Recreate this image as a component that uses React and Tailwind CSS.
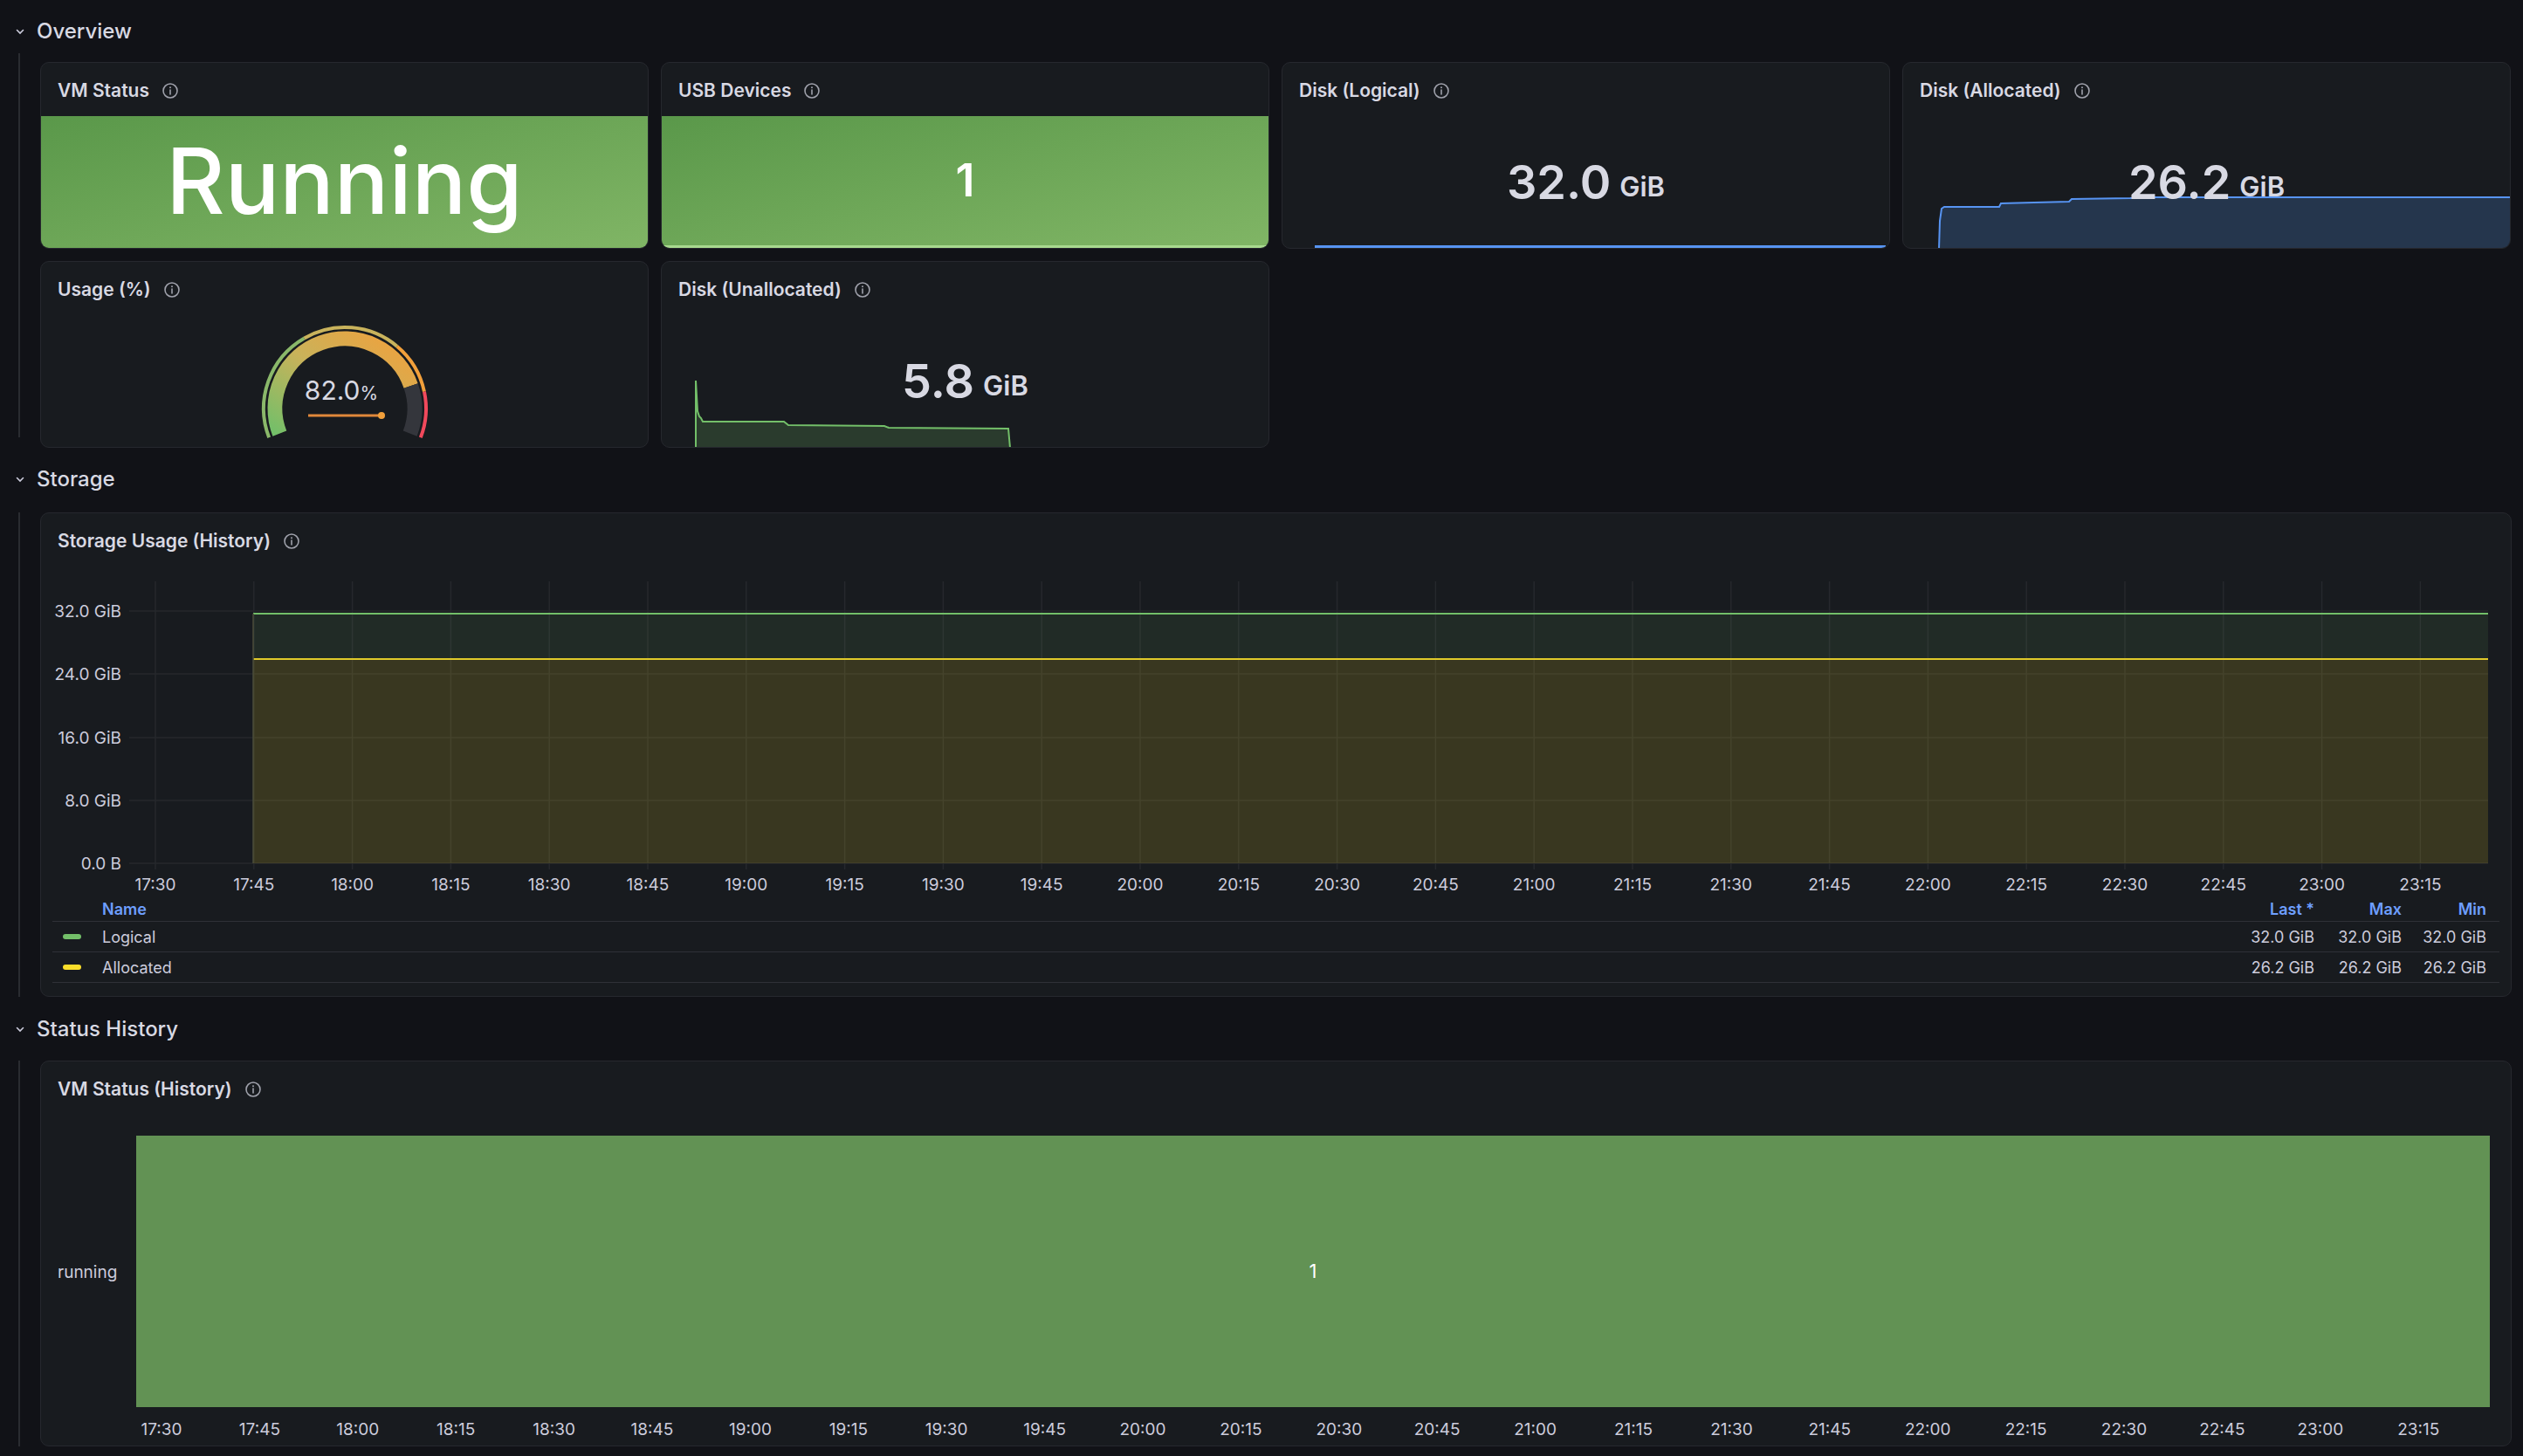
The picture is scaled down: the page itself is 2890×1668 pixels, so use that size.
import React from "react";

const times = ["17:30","17:45","18:00","18:15","18:30","18:45","19:00","19:15","19:30","19:45","20:00","20:15","20:30","20:45","21:00","21:15","21:30","21:45","22:00","22:15","22:30","22:45","23:00","23:15"];

function Info() {
  return (
    <svg width="20" height="20" viewBox="0 0 20 20" className="shrink-0">
      <circle cx="10" cy="10" r="8" fill="none" stroke="#9fa1ab" strokeWidth="1.6" />
      <line x1="10" y1="9" x2="10" y2="14" stroke="#9fa1ab" strokeWidth="1.6" strokeLinecap="round" />
      <circle cx="10" cy="6.2" r="1" fill="#9fa1ab" />
    </svg>
  );
}

function Chevron() {
  return (
    <svg width="14" height="14" viewBox="0 0 14 14" className="mr-[12px]">
      <path d="M3.5 5.5 L7 9 L10.5 5.5" fill="none" stroke="#ccccdc" strokeWidth="1.6" strokeLinecap="round" />
    </svg>
  );
}

function SectionHeader({ title, cls }) {
  return (
    <div className={"flex items-center pl-[16px] h-[32px] " + cls}>
      <Chevron />
      <span className="text-[24px] text-[#d8d9e3] font-medium">{title}</span>
    </div>
  );
}

function Title({ t }) {
  return (
    <div className="flex items-center gap-[14px] h-[61px] pl-[19px] pt-[2px] shrink-0">
      <span className="text-[21px] font-semibold text-[#d8d9e3]">{t}</span>
      <Info />
    </div>
  );
}

function Panel({ children, cls = "" }) {
  return (
    <div className={"relative flex flex-col bg-[#181b1f] border border-[#26282e] rounded-[10px] overflow-hidden " + cls}>
      {children}
    </div>
  );
}

function Value({ v, u }) {
  return (
    <div className="absolute inset-0 flex items-center justify-center pointer-events-none">
      <span className="text-[54px] font-semibold text-[#d8d9e3] leading-none">{v}</span>
      <span className="text-[31px] font-semibold text-[#d8d9e3] ml-[10px] mt-[10px] leading-none">{u}</span>
    </div>
  );
}

function polar(cx, cy, r, deg) {
  const a = (deg - 90) * Math.PI / 180;
  return [cx + r * Math.cos(a), cy + r * Math.sin(a)];
}
function arc(cx, cy, r, a1, a2) {
  const [x1, y1] = polar(cx, cy, r, a1);
  const [x2, y2] = polar(cx, cy, r, a2);
  const large = a2 - a1 > 180 ? 1 : 0;
  return `M${x1} ${y1} A${r} ${r} 0 ${large} 1 ${x2} ${y2}`;
}

function Gauge() {
  const cx = 348, cy = 107, s = -111, e = 111;
  const v = s + (e - s) * 0.82;
  return (
    <svg width="697" height="153" className="absolute left-0 top-0">
      <defs>
        <linearGradient id="gg" x1="0" y1="1" x2="1" y2="0">
          <stop offset="0" stopColor="#73bf69" />
          <stop offset="0.5" stopColor="#c9b25a" />
          <stop offset="1" stopColor="#f2a03b" />
        </linearGradient>
      </defs>
      <path d={arc(cx, cy, 93, s, -30)} stroke="#8ab86a" strokeWidth="4" fill="none" />
      <path d={arc(cx, cy, 93, -30, 40)} stroke="#c9b35c" strokeWidth="4" fill="none" />
      <path d={arc(cx, cy, 93, 40, 78)} stroke="#f2a03b" strokeWidth="4" fill="none" />
      <path d={arc(cx, cy, 93, 78, e)} stroke="#f2495c" strokeWidth="4" fill="none" />
      <path d={arc(cx, cy, 80, s, v)} stroke="url(#gg)" strokeWidth="17" fill="none" />
      <path d={arc(cx, cy, 80, v, e)} stroke="#34363c" strokeWidth="17" fill="none" />
      <text x={cx - 4} y={cy - 10} textAnchor="middle" fill="#d8d9e3" fontSize="30" fontFamily="Inter">82.0<tspan fontSize="21">%</tspan></text>
      <line x1="306" y1="115" x2="390" y2="115" stroke="#e0883a" strokeWidth="3" />
      <circle cx="390" cy="115" r="4" fill="#f2a03b" />
    </svg>
  );
}

function StorageChart() {
  const xs = times.map((_, i) => 131 + i * 112.8);
  const ys = [112, 184, 257, 329, 401];
  const labels = ["32.0 GiB", "24.0 GiB", "16.0 GiB", "8.0 GiB", "0.0 B"];
  return (
    <svg width="2831" height="440" className="absolute left-0 top-0" fontFamily="Inter">
      {ys.map((y, i) => (
        <g key={i}>
          <line x1="101" x2="2803" y1={y} y2={y} stroke="#26282d" strokeWidth="1.5" />
          <text x="92" y={y + 7} textAnchor="end" fill="#ccccdc" fontSize="19">{labels[i]}</text>
        </g>
      ))}
      {xs.map((x, i) => (
        <g key={i}>
          <line x1={x} x2={x} y1="78" y2="408" stroke="#26282d" strokeWidth="1.5" />
          <text x={x} y="432" textAnchor="middle" fill="#ccccdc" fontSize="19">{times[i]}</text>
        </g>
      ))}
      <rect x="243" y="115" width="2560" height="52" fill="#73bf69" fillOpacity="0.1" />
      <rect x="243" y="167" width="2560" height="234" fill="#fade2a" fillOpacity="0.15" />
      <line x1="243" x2="2803" y1="115" y2="115" stroke="#73bf69" strokeWidth="2" />
      <line x1="243" x2="2803" y1="167" y2="167" stroke="#e0c92a" strokeWidth="2" />
      <line x1="243" x2="243" y1="115" y2="401" stroke="#4a4d3a" strokeWidth="1.5" />
    </svg>
  );
}

export default function App() {
  const font = { fontFamily: "Inter, 'Noto Sans', sans-serif" };
  return (
    <div className="w-[2890px] h-[1668px] bg-[#111217] flex flex-col text-[#ccccdc] overflow-hidden" style={font}>
      <SectionHeader title="Overview" cls="mt-[20px]" />
      <div className="flex mt-[19px]">
        <div className="ml-[21px] w-[2px] bg-[#2a2c31] h-[440px] -mt-[10px]" />
        <div className="ml-[23px] grid grid-cols-[697px_697px_697px_697px] grid-rows-[214px_214px] gap-[14px]">
          <Panel>
            <Title t="VM Status" />
            <div className="flex-1 flex items-center justify-center bg-gradient-to-br from-[#5a984a] to-[#80b565]">
              <span className="text-[104px] font-medium text-white leading-none -mt-[4px]">Running</span>
            </div>
          </Panel>
          <Panel>
            <Title t="USB Devices" />
            <div className="flex-1 flex items-center justify-center bg-gradient-to-br from-[#5a984a] to-[#80b565] border-b-[3px] border-[#a8d98f]">
              <span className="text-[52px] font-semibold text-white leading-none">1</span>
            </div>
          </Panel>
          <Panel>
            <Title t="Disk (Logical)" />
            <div className="relative flex-1">
              <div className="absolute left-[37px] right-[4px] bottom-[0px] h-[3px] bg-[#5794f2]" />
              <Value v="32.0" u="GiB" />
            </div>
          </Panel>
          <Panel>
            <Title t="Disk (Allocated)" />
            <div className="relative flex-1">
              <svg width="697" height="153" className="absolute left-0 top-0">
                <path d="M39 153 L41 153 L42 120 L44 106 L47 104 L110 104 L112 100 L150 99 L190 98 L193 95 L260 94 L275 93 L697 93 L697 153 Z" fill="#5794f2" fillOpacity="0.22" />
                <path d="M39 153 L41 153 L42 120 L44 106 L47 104 L110 104 L112 100 L150 99 L190 98 L193 95 L260 94 L275 93 L697 93" fill="none" stroke="#5794f2" strokeWidth="2" />
              </svg>
              <Value v="26.2" u="GiB" />
            </div>
          </Panel>
          <Panel>
            <Title t="Usage (%)" />
            <div className="relative flex-1">
              <Gauge />
            </div>
          </Panel>
          <Panel>
            <Title t="Disk (Unallocated)" />
            <div className="relative flex-1">
              <svg width="697" height="153" className="absolute left-0 top-0">
                <path d="M39 153 L39 75 L41 110 L43 116 L45 118 L47 122 L140 122 L145 126 L255 127 L260 129 L397 130 L399 153 Z" fill="#73bf69" fillOpacity="0.2" />
                <path d="M39 153 L39 75 L41 110 L43 116 L45 118 L47 122 L140 122 L145 126 L255 127 L260 129 L397 130 L399 152 L697 152" fill="none" stroke="#73bf69" strokeWidth="2" />
              </svg>
              <Value v="5.8" u="GiB" />
            </div>
          </Panel>
        </div>
      </div>

      <SectionHeader title="Storage" cls="mt-[20px]" />
      <div className="flex mt-[22px]">
        <div className="ml-[21px] w-[2px] bg-[#2a2c31] h-[555px]" />
        <div className="ml-[23px] w-[2831px] h-[555px]">
          <Panel cls="h-full">
            <Title t="Storage Usage (History)" />
            <StorageChart />
            <div className="absolute left-[13px] right-[13px] top-[440px] text-[18px]">
              <div className="flex items-center h-[28px] border-b border-[#2f3137]">
                <span className="ml-[57px] text-[#6e9fff] font-semibold flex-1">Name</span>
                <span className="w-[100px] text-right text-[#6e9fff] font-semibold">Last *</span>
                <span className="w-[100px] text-right text-[#6e9fff] font-semibold">Max</span>
                <span className="w-[97px] text-right text-[#6e9fff] font-semibold mr-[15px]">Min</span>
              </div>
              {[["Logical", "#73bf69", "32.0 GiB"], ["Allocated", "#fade2a", "26.2 GiB"]].map(([n, c, v]) => (
                <div key={n} className="flex items-center h-[35px] border-b border-[#2f3137] text-[#ccccdc]">
                  <span className="ml-[12px] w-[21px] h-[6px] rounded-full" style={{ background: c }} />
                  <span className="ml-[24px] flex-1">{n}</span>
                  <span className="w-[100px] text-right">{v}</span>
                  <span className="w-[100px] text-right">{v}</span>
                  <span className="w-[97px] text-right mr-[15px]">{v}</span>
                </div>
              ))}
            </div>
          </Panel>
        </div>
      </div>

      <SectionHeader title="Status History" cls="mt-[21px]" />
      <div className="flex mt-[20px]">
        <div className="ml-[21px] w-[2px] bg-[#2a2c31] h-[442px]" />
        <div className="ml-[23px] w-[2831px] h-[442px]">
          <Panel cls="h-full">
            <Title t="VM Status (History)" />
            <div className="absolute left-[19px] top-[228px] text-[19px] text-[#ccccdc]">running</div>
            <div className="absolute left-[109px] top-[85px] w-[2696px] h-[311px] bg-[#629254] flex items-center justify-center">
              <span className="text-[22px] text-white">1</span>
            </div>
            <div className="absolute left-0 top-[408px] w-full h-[24px]">
              {times.map((t, i) => (
                <span key={t} className="absolute text-[19px] text-[#ccccdc] -translate-x-1/2" style={{ left: 138 + i * 112.4 }}>{t}</span>
              ))}
            </div>
          </Panel>
        </div>
      </div>
    </div>
  );
}
